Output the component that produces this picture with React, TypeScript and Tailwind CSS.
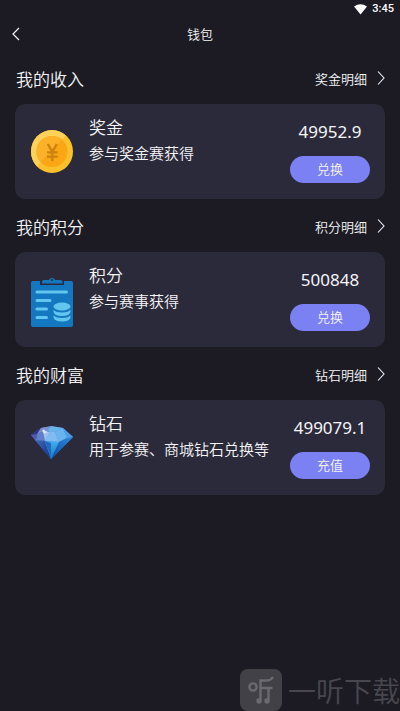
import type { ReactNode } from "react";

type Wallet = {
  heading: string;
  detail: string;
  name: string;
  description: string;
  amount: string;
  action: string;
  icon: ReactNode;
};

function CoinIcon() {
  return (
    <svg viewBox="0 0 42 43" className="h-[43px] w-[42px]" aria-hidden="true">
      <defs>
        <clipPath id="coin-outer">
          <ellipse cx="21" cy="21.5" rx="21" ry="21.5" />
        </clipPath>
        <clipPath id="coin-inner">
          <circle cx="21" cy="21.5" r="15.5" />
        </clipPath>
      </defs>
      <g clipPath="url(#coin-outer)">
        <rect width="42" height="43" fill="#fcc02a" />
        <path d="M0 0H40L5 37L0 38Z" fill="#fed158" />
      </g>
      <g clipPath="url(#coin-inner)">
        <rect width="42" height="43" fill="#f9a715" />
        <path d="M0 0H40L5 37L0 38Z" fill="#fbb228" />
      </g>
      <path
        d="M16.8 14L21.3 21.8L25.8 14M21.3 21.5V31M16 22.4H26.6M16 26.6H26.6"
        fill="none"
        stroke="#cb830d"
        strokeWidth="2.4"
      />
    </svg>
  );
}

function ClipboardIcon() {
  return (
    <svg viewBox="0 0 42 49" className="h-[49px] w-[42px]" aria-hidden="true">
      <path
        d="M2 3H9V7H33V3H40Q42 3 42 5V47Q42 49 40 49H2Q0 49 0 47V5Q0 3 2 3Z"
        fill="#1378bf"
      />
      <path
        d="M11 5.5V4Q11 2 13 2H18Q18.5 0 21 0Q23.5 0 24 2H29Q31.5 2 31.5 4V5.5Z"
        fill="#1378bf"
      />
      <circle cx="21" cy="2" r="1" fill="#2b2a3a" />
      <path
        d="M6 14H35.5M6 22.5H19M6 31H15.5M6 39.5H15.5"
        stroke="#62c6ee"
        strokeWidth="3"
        strokeLinecap="round"
      />
      <ellipse cx="31" cy="28.5" rx="8.5" ry="4" fill="#62c6ee" />
      <path
        d="M22.5 32Q25 34.5 31 34.5T39.5 32V34Q38.5 38 31 38T22.5 34Z"
        fill="#62c6ee"
      />
      <path
        d="M22.5 37.5Q25 40 31 40T39.5 37.5V39.5Q38.5 43.5 31 43.5T22.5 39.5Z"
        fill="#62c6ee"
      />
    </svg>
  );
}

function DiamondIcon() {
  return (
    <svg viewBox="0 0 42 33" className="h-[33px] w-[42px]" aria-hidden="true">
      <defs>
        <linearGradient id="gem-left" x1="0" y1="0" x2="1" y2="1">
          <stop offset="0" stopColor="#4369b8" />
          <stop offset="1" stopColor="#0b2f88" />
        </linearGradient>
        <linearGradient id="gem-middle" x1="0" y1="0" x2="0" y2="1">
          <stop offset="0" stopColor="#42b0ee" />
          <stop offset="1" stopColor="#1479c8" />
        </linearGradient>
        <linearGradient id="gem-right" x1="1" y1="0" x2="0" y2="1">
          <stop offset="0" stopColor="#2b8ddd" />
          <stop offset="1" stopColor="#0c4aa0" />
        </linearGradient>
      </defs>
      <path d="M0 9L10 2Q20 -1 32 2L42 11L20 33Z" fill="#3f86d4" />
      <path d="M0 9L10 2L14 5L4 14Z" fill="#32308a" />
      <path d="M0 9L6 8L5 15Z" fill="#5a58a8" />
      <path d="M10 2L20 0L16 5L12 7L6 8Z" fill="#7d8fd0" />
      <path d="M20 0L32 2L24 6L16 5Z" fill="#6ab4ec" />
      <path d="M6 8L12 5L14 15L5 15Z" fill="#5c81c8" />
      <path d="M12 5L19 6L14 15Z" fill="#a3bfea" />
      <path d="M19 5L24 6L28 16L14 15Z" fill="#7fbaf0" />
      <path d="M24 6L32 2L36 12L28 16Z" fill="#69b4ee" />
      <path d="M32 2L42 11L36 12Z" fill="#4f9fe6" />
      <path d="M4 14L14 15L20 33Z" fill="url(#gem-left)" />
      <path d="M14 15L28 16L20 33Z" fill="url(#gem-middle)" />
      <path d="M14 15L20 17L20 33Z" fill="#2469bd" />
      <path d="M28 16L36 12L42 11L20 33Z" fill="url(#gem-right)" />
      <path d="M11 5L13 3L14 5L17 6L14 7L13 8L12 6Z" fill="#dce7fb" />
    </svg>
  );
}

const wallets: Wallet[] = [
  {
    heading: "我的收入",
    detail: "奖金明细",
    name: "奖金",
    description: "参与奖金赛获得",
    amount: "49952.9",
    action: "兑换",
    icon: <CoinIcon />,
  },
  {
    heading: "我的积分",
    detail: "积分明细",
    name: "积分",
    description: "参与赛事获得",
    amount: "500848",
    action: "兑换",
    icon: <ClipboardIcon />,
  },
  {
    heading: "我的财富",
    detail: "钻石明细",
    name: "钻石",
    description: "用于参赛、商城钻石兑换等",
    amount: "499079.1",
    action: "充值",
    icon: <DiamondIcon />,
  },
];

function WalletSection({ wallet }: { wallet: Wallet }) {
  return (
    <section>
      <div className="flex h-[53px] items-center justify-between pt-0.5 pl-px">
        <h2 className="text-[17px] leading-6">{wallet.heading}</h2>
        <a href="#detail" className="flex items-center gap-[10px] text-[13px] leading-5">
          {wallet.detail}
          <svg viewBox="0 0 8 14" className="mb-0.5 h-[14px] w-2" aria-hidden="true">
            <path d="M1 0.5L7 7L1 13.5" fill="none" stroke="currentColor" strokeWidth="1.1" />
          </svg>
        </a>
      </div>
      <div className="flex h-[95px] rounded-[10px] bg-[#2b2a3a] pr-[15px] pl-4">
        <div className="w-[42px] shrink-0 pt-[26px]">{wallet.icon}</div>
        <div className="ml-4 min-w-0 flex-1 pt-[11px]">
          <h3 className="text-[17px] leading-6">{wallet.name}</h3>
          <p className="mt-0.5 text-[15px] leading-6 whitespace-nowrap">{wallet.description}</p>
        </div>
        <div className="flex w-20 shrink-0 flex-col items-center pt-4">
          <span className="font-['Noto_Sans'] text-[17px] leading-6 font-normal">{wallet.amount}</span>
          <button
            type="button"
            className="mt-3 h-[27px] w-full rounded-full bg-[#7b80f3] pb-0.5 text-[13px] leading-5"
          >
            {wallet.action}
          </button>
        </div>
      </div>
    </section>
  );
}

export default function App() {
  return (
    <div className="flex min-h-screen flex-col bg-[#1c1b23] font-['Noto_Sans_CJK_SC',sans-serif] font-[350] text-[#f5f5f7]">
      <div className="flex h-[18px] items-center justify-end gap-[5px] pr-[6px] font-['Roboto'] text-[11px] leading-4 font-medium text-white">
        <svg viewBox="0 0 13 11" className="h-[11px] w-[13px]" aria-hidden="true">
          <path d="M0 2.5Q6.5 -2 13 2.5L6.5 10.5Z" fill="currentColor" />
        </svg>
        <span>3:45</span>
      </div>
      <header className="grid h-[31px] grid-cols-[1fr_auto_1fr] items-center px-3">
        <button type="button" aria-label="返回" className="justify-self-start">
          <svg viewBox="0 0 8 14" className="h-[14px] w-2" aria-hidden="true">
            <path d="M7 1L1 7L7 13" fill="none" stroke="currentColor" strokeWidth="1.2" />
          </svg>
        </button>
        <h1 className="text-[13px] leading-5">钱包</h1>
      </header>
      <main className="px-[15px] pt-0.5">
        {wallets.map((wallet) => (
          <WalletSection key={wallet.name} wallet={wallet} />
        ))}
      </main>
      <footer className="mt-auto flex items-center justify-end gap-[6px] text-[#48474e]">
        <svg viewBox="0 0 42 42" className="h-[42px] w-[42px]" aria-hidden="true">
          <rect width="42" height="42" rx="8" fill="#424147" />
          <g fill="none" stroke="#6b6a6f" strokeWidth="2.4">
            <circle cx="13" cy="18" r="3.6" />
            <path d="M33 8Q31 11.500 27 11.500H20.500V32M20.500 19H32.500M28.500 19V32" />
          </g>
          <circle cx="19" cy="32" r="2.7" fill="#6b6a6f" />
          <circle cx="27" cy="32" r="2.7" fill="#6b6a6f" />
        </svg>
        <span className="text-[28px] leading-10 whitespace-nowrap">一听下载</span>
      </footer>
    </div>
  );
}
